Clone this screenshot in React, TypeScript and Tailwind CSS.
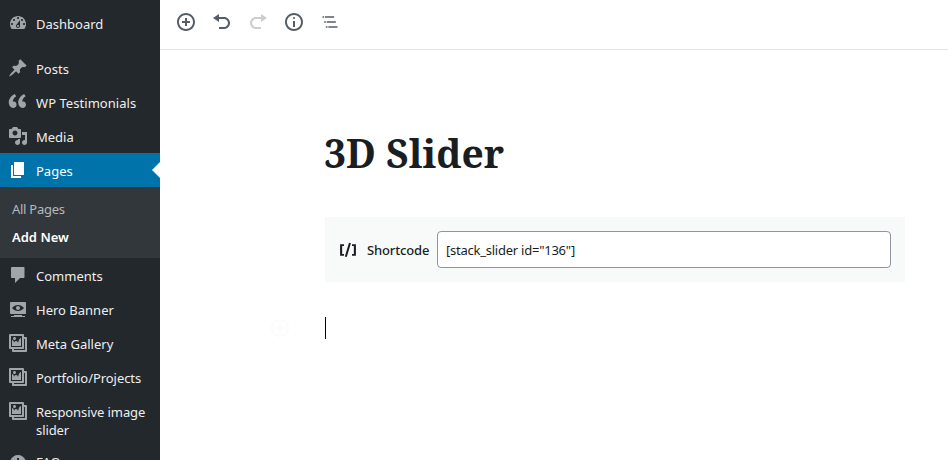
import React from 'react';

const icons = {
  dashboard:
    'M3.76 16h12.48c1.1-1.37 1.76-3.11 1.76-5 0-4.42-3.58-8-8-8s-8 3.58-8 8c0 1.89.66 3.63 1.76 5zM10 4c.55 0 1 .45 1 1s-.45 1-1 1-1-.45-1-1 .45-1 1-1zM6 6c.55 0 1 .45 1 1s-.45 1-1 1-1-.45-1-1 .45-1 1-1zm8 0c.55 0 1 .45 1 1s-.45 1-1 1-1-.45-1-1 .45-1 1-1zm-5.37 5.55L12 7v6c0 1.1-.9 2-2 2s-2-.9-2-2c0-.57.24-1.08.63-1.45zM4 10c.55 0 1 .45 1 1s-.45 1-1 1-1-.45-1-1 .45-1 1-1zm12 0c.55 0 1 .45 1 1s-.45 1-1 1-1-.45-1-1 .45-1 1-1zm-5 3c0-.55-.45-1-1-1s-1 .45-1 1 .45 1 1 1 1-.45 1-1z',
  pin: 'M10.44 3.02l1.82-1.82 6.36 6.35-1.83 1.82c-1.05-.68-2.48-.57-3.41.36l-.75.75c-.92.93-1.04 2.35-.35 3.41l-1.83 1.82-2.41-2.41-2.8 2.79c-.42.42-3.38 2.71-3.8 2.29s1.86-3.39 2.28-3.81l2.79-2.79L4.1 9.36l1.83-1.82c1.05.69 2.48.57 3.4-.36l.75-.75c.93-.92 1.05-2.35.36-3.41z',
  quote:
    'M8.54 12.74c0-.87-.24-1.61-.72-2.22-.73-.92-2.14-1.03-2.96-.85-.34-1.93 1.3-4.39 3.42-5.45L6.65 1.94C3.45 3.46.31 6.96.85 11.37 1.19 14.16 2.8 16 5.08 16c1 0 1.83-.29 2.48-.88.66-.59.98-1.38.98-2.38zm9.43 0c0-.87-.24-1.61-.72-2.22-.73-.92-2.14-1.03-2.96-.85-.34-1.93 1.3-4.39 3.42-5.45l-1.63-2.28c-3.2 1.52-6.34 5.02-5.8 9.43.34 2.79 1.95 4.63 4.23 4.63 1 0 1.83-.29 2.48-.88.66-.59.98-1.38.98-2.38z',
  media:
    'M13 11V4c0-.55-.45-1-1-1h-1.67L9 1H5L3.67 3H2c-.55 0-1 .45-1 1v7c0 .55.45 1 1 1h10c.55 0 1-.45 1-1zM7 4.5c1.38 0 2.5 1.12 2.5 2.5S8.38 9.5 7 9.5 4.5 8.38 4.5 7 5.62 4.5 7 4.5zM14 6h5v10.5c0 1.38-1.12 2.5-2.5 2.5S14 17.88 14 16.5s1.12-2.5 2.5-2.5c.17 0 .34.02.5.05V9h-3V6zm-4 8.05V13h2v3.5c0 1.38-1.12 2.5-2.5 2.5S7 17.88 7 16.5 8.12 14 9.5 14c.17 0 .34.02.5.05z',
  page: 'M6 15V2h10v13H6zm-1 1h8v2H3V5h2v11z',
  comment:
    'M4 2h11.500c.55 0 1 .45 1 1v9c0 .55-.45 1-1 1H12l-5 5v-5H4c-.55 0-1-.45-1-1V3c0-.55.45-1 1-1z',
  view: 'M18 14V4c0-.55-.45-1-1-1H3c-.55 0-1 .45-1 1v10c0 .55.45 1 1 1h14c.55 0 1-.45 1-1zm-8-8c2.3 0 4.4 1.14 6 3-1.6 1.86-3.7 3-6 3s-4.4-1.14-6-3c1.6-1.86 3.7-3 6-3zm2 3c0-1.1-.9-2-2-2s-2 .9-2 2 .9 2 2 2 2-.9 2-2zm2 8h3v1H3v-1h3v-1h8v1z',
  gallery:
    'M16 4h1.96c.57 0 1.04.47 1.04 1.04v12.92c0 .57-.47 1.04-1.04 1.04H5.04C4.47 19 4 18.53 4 17.96V16H2.04C1.47 16 1 15.53 1 14.96V2.04C1 1.47 1.47 1 2.04 1h12.92c.57 0 1.04.47 1.04 1.04V4zM3 14h11V3H3v11zm5-8.5C8 4.67 7.33 4 6.5 4S5 4.67 5 5.5 5.67 7 6.5 7 8 6.33 8 5.5zm2 4.5s1-5 3-5v8H4V7c2 0 2 3 2 3s.33-2 2-2 2 2 2 2zm7 7V6h-1v8.96c0 .57-.47 1.04-1.04 1.04H6v1h11z',
  info: 'M10 2c4.42 0 8 3.58 8 8s-3.58 8-8 8-8-3.58-8-8 3.58-8 8-8zM9 5v2h2V5H9zm0 3v7h2V8H9z',
  insert:
    'M10 1c-5 0-9 4-9 9s4 9 9 9 9-4 9-9-4-9-9-9zm0 16c-3.9 0-7-3.1-7-7s3.1-7 7-7 7 3.1 7 7-3.1 7-7 7zm1-11H9v3H6v2h3v3h2v-3h3V9h-3V6z',
  undo: 'M12 5H7V2L1 6l6 4V7h5c2.2 0 4 1.8 4 4s-1.8 4-4 4H7v2h5c3.3 0 6-2.7 6-6s-2.7-6-6-6z',
  redo: 'M8 5h5V2l6 4-6 4V7H8c-2.2 0-4 1.8-4 4s1.8 4 4 4h5v2H8c-3.3 0-6-2.7-6-6s2.7-6 6-6z',
  infoOutline:
    'M9 15h2V9H9v6zm1-10c-.5 0-1 .5-1 1s.5 1 1 1 1-.5 1-1-.5-1-1-1zm0-4c-5 0-9 4-9 9s4 9 9 9 9-4 9-9-4-9-9-9zm0 16c-3.9 0-7-3.1-7-7s3.1-7 7-7 7 3.1 7 7-3.1 7-7 7z',
  outline:
    'M5 5H3v2h2V5zm3 8h11v-2H8v2zm9-8H6v2h11V5zM7 11H5v2h2v-2zm0 8h2v-2H7v2zm3-2v2h11v-2H10z',
  shortcode:
    'M8.2 19.900l2.300.6 5-16.500-2.300-.6-5 16.500zM2.500 19h4.700v-2.200H5V7.200h2.200V5H2.500v14zM16.800 5v2.200H19v9.600h-2.200V19h4.700V5h-4.700z',
};

type IconName = keyof typeof icons;

function Icon({ name, box = 20, className = '' }: { name: IconName; box?: number; className?: string }) {
  return (
    <svg viewBox={`0 0 ${box} ${box}`} className={`size-5 shrink-0 ${className}`} fill="currentColor" fillRule="evenodd">
      <path d={icons[name]} />
    </svg>
  );
}

function MenuItem({ icon, label, text = 'pt-[9px]', active = false }: { icon: IconName; label: string; text?: string; active?: boolean }) {
  return (
    <li className={`relative flex min-h-[34px] shrink-0 items-start pl-2 ${active ? 'bg-[#0073aa] text-white' : 'text-[#eee]'}`}>
      <Icon name={icon} className={`mt-[7px] ${active ? 'text-white' : 'text-[#a0a5aa]'}`} />
      <span className={`ml-2 w-[120px] pb-[7px] text-[13px] leading-[18px] ${text}`}>{label}</span>
      {active && (
        <span className="absolute top-[9px] right-0 border-y-8 border-r-8 border-y-transparent border-r-white" />
      )}
    </li>
  );
}

export default function App() {
  return (
    <div className="flex h-[460px] w-[948px] overflow-hidden bg-white font-['Noto_Sans','Open_Sans',sans-serif]">
      <nav className="w-40 shrink-0 overflow-hidden bg-[#23282d]">
        <ul className="flex flex-col pt-1.5">
          <MenuItem icon="dashboard" label="Dashboard" />
          <li className="h-[11px]" />
          <MenuItem icon="pin" label="Posts" />
          <MenuItem icon="quote" label="WP Testimonials" text="pt-[9px] tracking-[0.05px]" />
          <MenuItem icon="media" label="Media" />
          <MenuItem icon="page" label="Pages" active />
          <li className="h-[71px] bg-[#32373c] pt-2 pl-3 text-[13px] leading-7">
            <div className="tracking-[-0.27px] text-[#b4b9be]">All Pages</div>
            <div className="font-semibold text-white">Add New</div>
          </li>
          <MenuItem icon="comment" label="Comments" />
          <MenuItem icon="view" label="Hero Banner" />
          <MenuItem icon="gallery" label="Meta Gallery" />
          <MenuItem icon="gallery" label="Portfolio/Projects" text="pt-[9px] tracking-[-0.06px]" />
          <MenuItem icon="gallery" label="Responsive image slider" text="pt-[9px] tracking-[-0.08px]" />
          <MenuItem icon="info" label="FAQs" text="pt-[7px]" />
        </ul>
      </nav>

      <main className="flex-1">
        <header className="flex h-[50px] items-start gap-4 border-b border-[#e2e4e7] pt-[11.5px] pl-4 text-[#555d66]">
          <Icon name="insert" />
          <Icon name="undo" />
          <Icon name="redo" className="opacity-30" />
          <Icon name="infoOutline" />
          <Icon name="outline" box={24} />
        </header>

        <div className="relative ml-[165px] w-[580px] text-[#191e23]">
          <h1 className="-ml-px h-[167px] pt-[73px] font-['Noto_Serif','DejaVu_Serif_Condensed','DejaVu_Serif',serif] text-[39px] leading-[60px] font-bold whitespace-nowrap">
            3D Slider
          </h1>
          <section className="flex h-[65px] items-center bg-[#f8f9f9] px-3.5 text-[13px]">
            <Icon name="shortcode" box={24} className="-ml-px" />
            <span className="ml-[9px] w-[70px] pt-0.5 font-medium tracking-[-0.15px] whitespace-nowrap">Shortcode</span>
            <div className="flex h-[37px] flex-1 items-center rounded border border-[#8d96a0] bg-white px-2 pt-0.5 tracking-[-0.24px] whitespace-nowrap">
              [stack_slider id=&quot;136&quot;]
            </div>
          </section>
          <div className="mt-[35px] h-[22px] w-px bg-black" />
          <Icon name="insert" className="absolute top-[268px] -left-[55px] text-[#fbfbfb]" />
        </div>
      </main>
    </div>
  );
}
